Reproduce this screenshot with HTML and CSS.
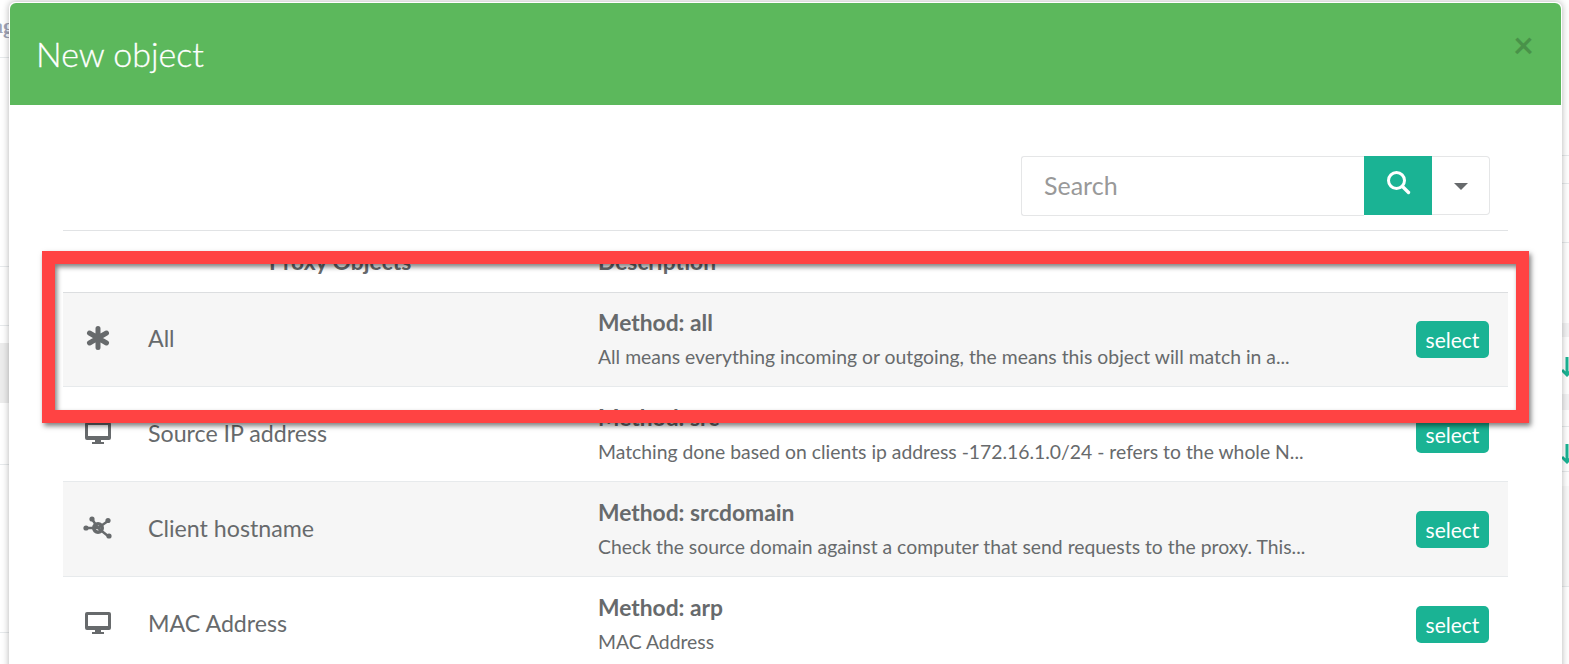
FILE: index.html
```html
<!DOCTYPE html>
<html lang="en">
<head>
    <meta charset="UTF-8">
    <title>New object</title>
    <link rel="stylesheet" href="styles.css">
</head>
<body>
    <div class="behind">
        <span class="behind-text">ag</span>
        <span class="behind-line left line-1"></span>
        <span class="behind-line left line-2"></span>
        <span class="behind-line left line-3"></span>
        <span class="behind-block left block-1"></span>
        <span class="behind-line left line-4"></span>
        <span class="behind-line left line-5"></span>
        <span class="behind-line right line-6"></span>
        <span class="behind-line right line-7"></span>
        <span class="behind-line right line-8"></span>
        <span class="behind-block right block-2"></span>
        <span class="behind-block right block-3"></span>
        <span class="behind-line right line-9"></span>
        <span class="behind-line right line-10"></span>
        <span class="behind-block right block-4"></span>
        <svg class="arrow arrow-a" viewBox="0 0 12 22"><path d="M6 1v18M1 14l5 5 5-5" fill="none" stroke="#1ab394" stroke-width="3"/></svg>
        <svg class="arrow arrow-b" viewBox="0 0 12 22"><path d="M6 1v18M1 14l5 5 5-5" fill="none" stroke="#1ab394" stroke-width="3"/></svg>
    </div>

    <div class="modal">
        <div class="modal-header">
            <h4 class="modal-title">New object</h4>
            <span class="close">&times;</span>
        </div>
        <div class="modal-body">
            <div class="toolbar">
                <div class="search">
                    <input class="search-input" type="text" placeholder="Search">
                    <button class="search-btn">
                        <svg width="26" height="26" viewBox="0 0 26 26"><circle cx="11.5" cy="11.5" r="8" fill="none" stroke="#fff" stroke-width="3"/><path d="M17.5 17.5l6 6" stroke="#fff" stroke-width="3.4" stroke-linecap="round"/></svg>
                    </button>
                    <button class="search-drop"><span class="caret"></span></button>
                </div>
            </div>

            <div class="table">
                <div class="row head">
                    <div class="col-icon"></div>
                    <div class="col-name"><span class="head-name">Proxy Objects</span></div>
                    <div class="col-desc">Description</div>
                    <div class="col-action"></div>
                </div>

                <div class="row odd">
                    <div class="col-icon">
                        <svg width="24" height="24" viewBox="0 0 24 24"><path d="M12 2.5v19M3.5 7L20.500 17M20.500 7L3.500 17" stroke="#676a6c" stroke-width="5" stroke-linecap="round"/></svg>
                    </div>
                    <div class="col-name">All</div>
                    <div class="col-desc">
                        <div class="method">Method: all</div>
                        <div class="note">All means everything incoming or outgoing, the means this object will match in a...</div>
                    </div>
                    <div class="col-action"><button class="select-btn">select</button></div>
                </div>

                <div class="row">
                    <div class="col-icon">
                        <svg width="28" height="24" viewBox="0 0 28 24"><path d="M3 1h22a2 2 0 0 1 2 2v14a2 2 0 0 1-2 2H3a2 2 0 0 1-2-2V3a2 2 0 0 1 2-2zm1 3v11h20V4zM11 19h6v2h3v2H8v-2h3z" fill="#676a6c" fill-rule="evenodd"/></svg>
                    </div>
                    <div class="col-name">Source IP address</div>
                    <div class="col-desc">
                        <div class="method">Method: src</div>
                        <div class="note">Matching done based on clients ip address -172.16.1.0/24 - refers to the whole N...</div>
                    </div>
                    <div class="col-action"><button class="select-btn">select</button></div>
                </div>

                <div class="row odd">
                    <div class="col-icon">
                        <svg width="30" height="24" viewBox="0 0 30 24"><g stroke="#676a6c" stroke-width="2.4"><path d="M15 12L9 3M15 12L25 5M15 12L25 20M15 12H3"/></g><circle cx="15" cy="12" r="4.200" fill="none" stroke="#676a6c" stroke-width="3.600"/><g fill="#676a6c"><circle cx="9" cy="3" r="2.600"/><circle cx="25" cy="4.500" r="2.600"/><circle cx="26" cy="20" r="2.600"/><circle cx="3" cy="12" r="2.600"/></g></svg>
                    </div>
                    <div class="col-name">Client hostname</div>
                    <div class="col-desc">
                        <div class="method">Method: srcdomain</div>
                        <div class="note">Check the source domain against a computer that send requests to the proxy. This...</div>
                    </div>
                    <div class="col-action"><button class="select-btn">select</button></div>
                </div>

                <div class="row">
                    <div class="col-icon">
                        <svg width="28" height="24" viewBox="0 0 28 24"><path d="M3 1h22a2 2 0 0 1 2 2v14a2 2 0 0 1-2 2H3a2 2 0 0 1-2-2V3a2 2 0 0 1 2-2zm1 3v11h20V4zM11 19h6v2h3v2H8v-2h3z" fill="#676a6c" fill-rule="evenodd"/></svg>
                    </div>
                    <div class="col-name">MAC Address</div>
                    <div class="col-desc">
                        <div class="method">Method: arp</div>
                        <div class="note">MAC Address</div>
                    </div>
                    <div class="col-action"><button class="select-btn">select</button></div>
                </div>
            </div>
        </div>
    </div>

    <div class="highlight"></div>
</body>
</html>
```

FILE: styles.css
```css
html, body {
    height: 100%;
}
body {
    margin: 0;
    overflow: hidden;
    background-color: #fff;
    font-family: Lato, "Open Sans", sans-serif;
    color: #676a6c;
}

/* page behind the modal */
.behind-text {
    position: absolute;
    left: -8px;
    top: 13px;
    font-family: "Liberation Serif", serif;
    font-size: 22px;
    font-weight: bold;
    color: #a0a3b5;
}
.behind-line {
    position: absolute;
    height: 1px;
    background-color: #e7eaec;
}
.behind-block {
    position: absolute;
    background-color: #f3f3f4;
}
.left { left: 0; width: 10px; }
.right { right: 0; width: 8px; }
.line-1 { top: 57px; }
.line-2 { top: 266px; }
.line-3 { top: 325px; }
.block-1 { top: 343px; height: 60px; background-color: #ececec; }
.line-4 { top: 464px; }
.line-5 { top: 632px; }
.line-6 { top: 155px; }
.line-7 { top: 183px; }
.line-8 { top: 242px; }
.block-2 { top: 323px; height: 14px; }
.block-3 { top: 394px; height: 16px; }
.line-9 { top: 426px; }
.line-10 { top: 471px; }
.block-4 { top: 486px; height: 100px; background-color: #f9f9f9; border-bottom: 1px solid #e7eaec; }
.arrow {
    position: absolute;
    right: -4px;
    width: 12px;
    height: 22px;
}
.arrow-a { top: 356px; }
.arrow-b { top: 443px; }

.modal {
    position: absolute;
    left: 9px;
    top: 2px;
    width: 1551px;
    height: 700px;
    border: 1px solid #fff;
    background-color: #fff;
    border-radius: 6px 6px 0 0;
    box-shadow: 0 0 7px rgba(0, 0, 0, 0.3);
}
.modal-header {
    height: 102px;
    display: flex;
    align-items: center;
    justify-content: space-between;
    padding: 0 27px;
    box-sizing: border-box;
    background-color: #5cb85c;
    border-radius: 6px 6px 0 0;
}
.modal-title {
    margin: 0 0 2px -1px;
    font-size: 34px;
    font-weight: 300;
    -webkit-text-stroke: 0.3px #fff;
    color: #fff;
}
.close {
    font-size: 36px;
    font-weight: bold;
    line-height: 1;
    color: #000;
    opacity: 0.2;
    margin-top: -20px;
}

.modal-body {
    padding: 51px 53px 0;
}
.toolbar {
    display: flex;
    justify-content: flex-end;
    padding-bottom: 14px;
    border-bottom: 1px solid #e1e3e5;
}
.search {
    display: flex;
    height: 60px;
    margin-right: 18px;
}
.search-input {
    width: 343px;
    box-sizing: border-box;
    padding: 0 22px 2px;
    border: 1px solid #e5e6e7;
    border-right: none;
    border-radius: 3px 0 0 3px;
    font-family: inherit;
    font-size: 25px;
    outline: none;
}
.search-input::placeholder {
    color: #999;
    opacity: 1;
}
.search-btn {
    width: 68px;
    height: 59px;
    padding: 0 0 4px;
    border: none;
    background-color: #1ab394;
}
.search-drop {
    width: 58px;
    height: 59px;
    padding: 0;
    background-color: #fff;
    border: 1px solid #e5e6e7;
    border-left: none;
    border-radius: 0 4px 4px 0;
}
.caret {
    display: inline-block;
    border-top: 7px solid #676a6c;
    border-left: 7px solid transparent;
    border-right: 7px solid transparent;
}

.row {
    display: flex;
    align-items: center;
    height: 95px;
    box-sizing: border-box;
    border-bottom: 1px solid #e7eaec;
    font-size: 23.2px;
}
.row.head {
    height: 62px;
    margin-bottom: -1px;
    border-bottom-color: #dcdee0;
    font-weight: bold;
    font-size: 22.8px;
    align-items: flex-start;
    padding-top: 16px;
    position: relative;
}
.row.odd {
    background-color: #f6f6f6;
}
.col-icon {
    width: 85px;
    padding: 0 15px 2px 0;
    box-sizing: border-box;
    display: flex;
    justify-content: center;
}
.col-name {
    width: 450px;
    padding-bottom: 3px;
}
.head-name {
    padding-left: 121px;
}
.col-desc {
    flex: 1;
    padding-bottom: 2px;
}
.col-action {
    padding-right: 19px;
}
.method {
    font-size: 22.800px;
    font-weight: bold;
    margin-bottom: 9px;
}
.note {
    font-size: 19.350px;
}
.select-btn {
    display: block;
    width: 73px;
    height: 37px;
    padding: 0;
    border: none;
    border-radius: 5px;
    background-color: #1ab394;
    color: #fff;
    font-family: inherit;
    font-size: 21px;
}

/* red box drawn over the screenshot */
.highlight {
    position: absolute;
    left: 42px;
    top: 251px;
    width: 1487px;
    height: 172px;
    box-sizing: border-box;
    border: 13px solid #ff4343;
    box-shadow: 2px 3px 5px rgba(0, 0, 0, 0.5), inset 2px 3px 5px rgba(0, 0, 0, 0.5);
}
```
